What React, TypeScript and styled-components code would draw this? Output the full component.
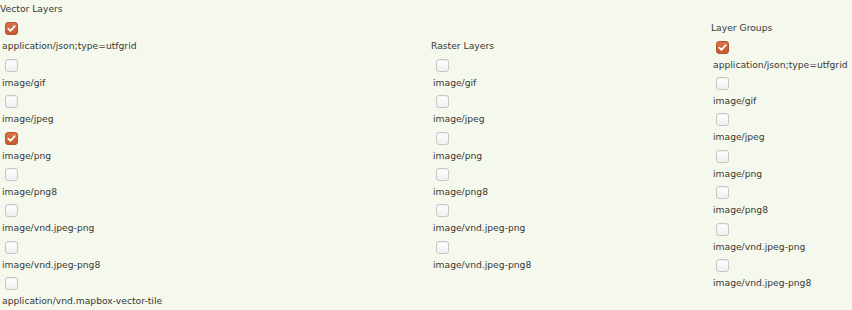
import React from "react"
import styled, { createGlobalStyle } from "styled-components"

const GlobalStyle = createGlobalStyle`
  body {
    margin: 0;
    background: #f5f8ec;
    font-family: "DejaVu Sans", Verdana, sans-serif;
    font-size: 9.2px;
    color: #383838;
  }
`

const Columns = styled.div`
  display: grid;
  grid-template-columns: 431px 280px 141px;
  align-items: center;
  height: 310px;
`

const Column = styled.div`
  display: flex;
  flex-direction: column;
  align-items: flex-start;
  min-width: 0;
`

const Heading = styled.div`
  line-height: 16px;
`

const Item = styled.div`
  display: flex;
  flex-direction: column;
  align-items: flex-start;
`

const Box = styled.span<{ checked: boolean }>`
  display: block;
  width: 13px;
  height: 13px;
  box-sizing: border-box;
  margin: 5px 0 4px 5px;
  border-radius: 3px;
  border: 1px solid ${(p) => (p.checked ? "#b5532c" : "#c6c6c6")};
  background: ${(p) =>
    p.checked
      ? "linear-gradient(#dd7046, #c45a31)"
      : "linear-gradient(#ffffff, #f0f0f0)"};
  box-shadow: ${(p) => (p.checked ? "none" : "inset 0 1px 1px rgba(0,0,0,0.06)")};
  position: relative;
`

const Label = styled.div`
  line-height: 14.4px;
  padding-left: 2px;
  white-space: nowrap;
`

const Tick = () => (
  <svg width="11" height="11" viewBox="0 0 11 11" style={{ position: "absolute", left: 0, top: 0 }}>
    <path d="M2.3 5.6 L4.5 7.8 L8.7 3.2" fill="none" stroke="#fff" strokeWidth="1.8" strokeLinecap="round" strokeLinejoin="round" />
  </svg>
)

type Format = { name: string; checked?: boolean }

const vector: Format[] = [
  { name: "application/json;type=utfgrid", checked: true },
  { name: "image/gif" },
  { name: "image/jpeg" },
  { name: "image/png", checked: true },
  { name: "image/png8" },
  { name: "image/vnd.jpeg-png" },
  { name: "image/vnd.jpeg-png8" },
  { name: "application/vnd.mapbox-vector-tile" },
]

const raster: Format[] = [
  { name: "image/gif" },
  { name: "image/jpeg" },
  { name: "image/png" },
  { name: "image/png8" },
  { name: "image/vnd.jpeg-png" },
  { name: "image/vnd.jpeg-png8" },
]

const groups: Format[] = [
  { name: "application/json;type=utfgrid", checked: true },
  { name: "image/gif" },
  { name: "image/jpeg" },
  { name: "image/png" },
  { name: "image/png8" },
  { name: "image/vnd.jpeg-png" },
  { name: "image/vnd.jpeg-png8" },
]

function FormatList({ title, formats }: { title: string; formats: Format[] }) {
  return (
    <Column>
      <Heading>{title}</Heading>
      {formats.map((f) => (
        <Item key={f.name}>
          <Box checked={!!f.checked}>{f.checked && <Tick />}</Box>
          <Label>{f.name}</Label>
        </Item>
      ))}
    </Column>
  )
}

export default function App() {
  return (
    <>
      <GlobalStyle />
      <Columns>
        <FormatList title="Vector Layers" formats={vector} />
        <FormatList title="Raster Layers" formats={raster} />
        <FormatList title="Layer Groups" formats={groups} />
      </Columns>
    </>
  )
}
